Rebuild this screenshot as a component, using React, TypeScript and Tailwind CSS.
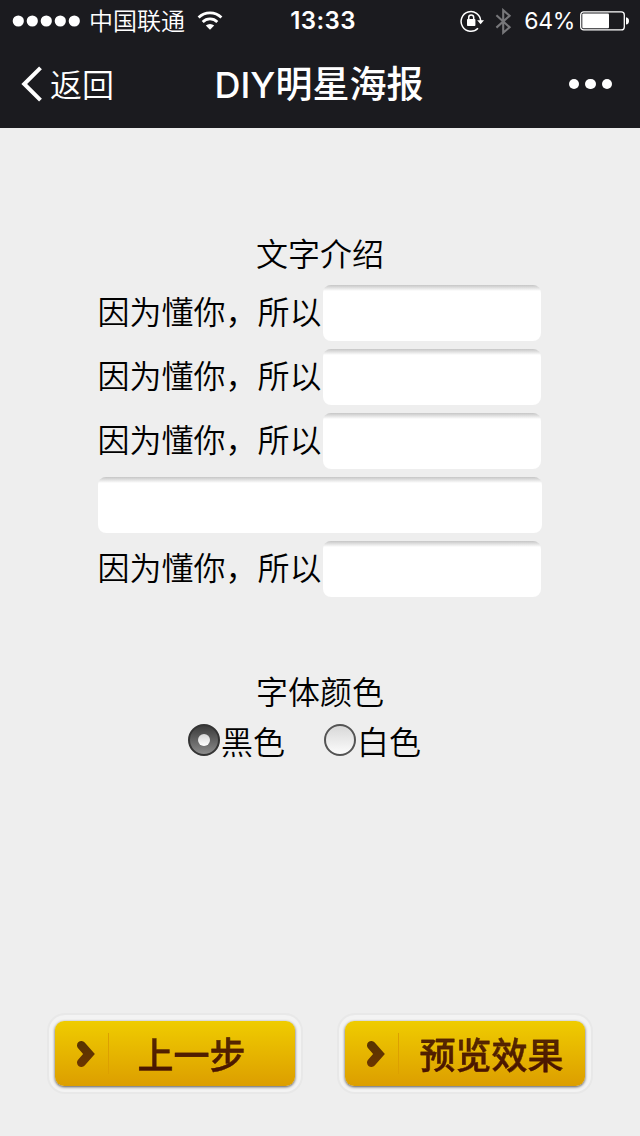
import { useState } from "react";

type TextColor = "black" | "white";

interface Line {
	id: number;
	prefix?: string;
}

const LINES: Line[] = [
	{ id: 1, prefix: "因为懂你，所以" },
	{ id: 2, prefix: "因为懂你，所以" },
	{ id: 3, prefix: "因为懂你，所以" },
	{ id: 4 },
	{ id: 5, prefix: "因为懂你，所以" },
];

const COLORS: { value: TextColor; label: string }[] = [
	{ value: "black", label: "黑色" },
	{ value: "white", label: "白色" },
];

function StatusBar() {
	return (
		<div className="grid h-10 grid-cols-[1fr_auto_1fr] items-center pl-3 pr-[11px]">
			<div className="flex items-center">
				<svg width="70" height="12" viewBox="0 0 70 12" fill="#fff">
					{[6.3, 20.3, 34.3, 48.3, 62.3].map((cx) => (
						<circle key={cx} cx={cx} cy="6" r="5.6" />
					))}
				</svg>
				<span className="ml-[7px] pb-0.5 text-2xl leading-10 font-[350]">中国联通</span>
				<svg className="ml-[12px]" width="26" height="20" viewBox="0 0 26 20" fill="none" stroke="#fff" strokeWidth="2.8">
					<path d="M1.6 6.6a16.2 16.2 0 0 1 22.8 0" />
					<path d="M5.7 10.9a10.4 10.4 0 0 1 14.6 0" />
					<path d="M13 18.8l-4.2-4.2a6 6 0 0 1 8.4 0z" fill="#fff" stroke="none" />
				</svg>
			</div>
			<span className="pl-[5px] font-['Inter'] text-[24px] leading-10 font-semibold tracking-[0.4px]">13:33</span>
			<div className="flex items-center justify-end">
				<svg width="24" height="24" viewBox="0 0 24 24" fill="none" stroke="#fff" strokeWidth="1.5">
					<path d="M18 19.2A9.8 9.8 0 1 1 20.7 12" />
					<path d="M17.2 11.3h6.8l-3.4 4z" fill="#fff" stroke="none" />
					<rect x="7" y="10" width="8.4" height="7" rx="0.8" fill="#fff" stroke="none" />
					<path d="M8.7 11V8.4a2.5 2.5 0 0 1 5 0V11" />
				</svg>
				<svg className="ml-[11px]" width="17" height="27" viewBox="0 0 17 27" fill="none" stroke="#77777a" strokeWidth="2.1">
					<path d="M1.4 7.2l13.2 12-6.4 5.5V2.2l6.4 5.6L1.4 19.6" />
				</svg>
				<span className="ml-[12px] font-['Inter'] text-[23px] leading-10 tracking-[-0.3px]">64%</span>
				<svg className="ml-[5px]" width="49" height="20" viewBox="0 0 49 20">
					<rect x="0.7" y="0.9" width="43.6" height="18" rx="3" fill="none" stroke="#fff" strokeWidth="1.3" />
					<rect x="2.3" y="2.5" width="26.7" height="14.8" rx="1" fill="#fff" />
					<path d="M46 6.3c2 .4 3 1.6 3 3.6s-1 3.2-3 3.6z" fill="#fff" />
				</svg>
			</div>
		</div>
	);
}

function NavBar() {
	return (
		<div className="grid h-[88px] grid-cols-[1fr_auto_1fr] items-center pl-[21px] pr-7">
			<button className="flex items-center">
				<svg width="22" height="36" viewBox="0 0 22 36" fill="none" stroke="#fff" strokeWidth="4">
					<path d="M19.5 1.8L3.2 18l16.3 16.2" />
				</svg>
				<span className="ml-[7px] pb-0.5 text-[32px] leading-10 font-[350]">返回</span>
			</button>
			<h1 className="pb-0.5 pl-[5px] text-[37px] leading-10 font-medium">
				<span className="font-['Inter'] text-[36px] font-medium">DIY</span>明星海报
			</h1>
			<button className="flex items-center justify-end gap-[6px]">
				<span className="size-[10.5px] rounded-full bg-white" />
				<span className="size-[10.5px] rounded-full bg-white" />
				<span className="size-[10.5px] rounded-full bg-white" />
			</button>
		</div>
	);
}

function TextField({ value, onChange }: { value: string; onChange: (value: string) => void }) {
	return (
		<input
			type="text"
			value={value}
			onChange={(e) => onChange(e.target.value)}
			className="h-14 min-w-0 flex-1 rounded-lg bg-white bg-linear-to-b from-[#c6c6c6] to-white bg-size-[100%_6px] bg-no-repeat px-3 text-[32px] outline-none"
		/>
	);
}

function ColorRadio({ label, checked, onSelect }: { label: string; checked: boolean; onSelect: () => void }) {
	return (
		<label className="flex items-center">
			<span
				className={`grid size-8 place-items-center rounded-full border-2 ${
					checked
						? "border-[#343434] bg-linear-to-b from-[#3c3c3c] to-[#8c8c8c]"
						: "border-[#545454] bg-linear-to-b from-[#d8d8d8] to-[#fcfcfc]"
				}`}
			>
				<input type="radio" name="color" checked={checked} onChange={onSelect} className="sr-only" />
				{checked && <span className="size-3 rounded-full bg-linear-to-b from-[#d6d6d6] to-white" />}
			</span>
			<span className="ml-px leading-12">{label}</span>
		</label>
	);
}

function GoldButton({ label, labelClass }: { label: string; labelClass: string }) {
	return (
		<button className="h-[81px] w-[256px] rounded-[18px] border-2 border-[#e8e8e8] bg-[#f3f3f3] px-[6px] pt-[6px] pb-[7px]">
			<span className="flex h-[65px] items-center rounded-[9px] bg-linear-to-b from-[#efcc00] to-[#dc9e00] shadow-[0_1px_3px_#555]">
				<svg className="mt-px ml-[21px]" width="20" height="28" viewBox="0 0 20 28">
					<defs>
						<linearGradient id="arrow" gradientUnits="userSpaceOnUse" x1="0" y1="0" x2="0" y2="28">
							<stop offset="0" stopColor="#563400" />
							<stop offset="1" stopColor="#6d3500" />
						</linearGradient>
					</defs>
					<path
						d="M5.4 5.4L13 14l-7.6 8.6"
						fill="none"
						stroke="url(#arrow)"
						strokeWidth="8.8"
						strokeLinecap="round"
						strokeLinejoin="miter"
					/>
				</svg>
				<span className="ml-3 h-[41px] w-px bg-[#dca000]" />
				<span
					className={`flex-1 bg-linear-to-b from-[#5c3000] to-[#440b00] bg-clip-text pb-0.5 text-center text-[36px] leading-[52px] font-medium text-transparent [-webkit-text-stroke:0.3px_#4c1800] ${labelClass}`}
				>
					{label}
				</span>
			</span>
		</button>
	);
}

export default function App() {
	const [texts, setTexts] = useState<Record<number, string>>({});
	const [color, setColor] = useState<TextColor>("black");

	return (
		<div className="flex h-[1136px] w-[640px] flex-col overflow-hidden bg-[#eee] font-['Noto_Sans_CJK_SC',sans-serif] text-black">
			<header className="h-32 bg-[#1b1b1f] text-white">
				<StatusBar />
				<NavBar />
			</header>

			<main className="flex flex-1 flex-col items-center pt-[100px] text-[32px] font-[350]">
				<h2 className="leading-12">文字介绍</h2>
				<div className="mt-[9px] flex w-[444px] flex-col gap-2">
					{LINES.map((line) => (
						<div key={line.id} className={`flex items-center ${line.prefix ? "pr-px" : ""}`}>
							{line.prefix && (
								<span className="mr-[1.5px] -ml-[0.5px] w-[224px] shrink-0 pb-1.5 leading-12">{line.prefix}</span>
							)}
							<TextField
								value={texts[line.id] ?? ""}
								onChange={(value) => setTexts((prev) => ({ ...prev, [line.id]: value }))}
							/>
						</div>
					))}
				</div>

				<h2 className="mt-[69px] leading-12">字体颜色</h2>
				<div className="flex gap-[39px] pt-0.5 pr-[31px]">
					{COLORS.map((c) => (
						<ColorRadio key={c.value} label={c.label} checked={color === c.value} onSelect={() => setColor(c.value)} />
					))}
				</div>
			</main>

			<footer className="flex gap-[34px] pb-[42px] pl-[47px]">
				<GoldButton label="上一步" labelClass="pr-[21px]" />
				<GoldButton label="预览效果" labelClass="pr-px" />
			</footer>
		</div>
	);
}
